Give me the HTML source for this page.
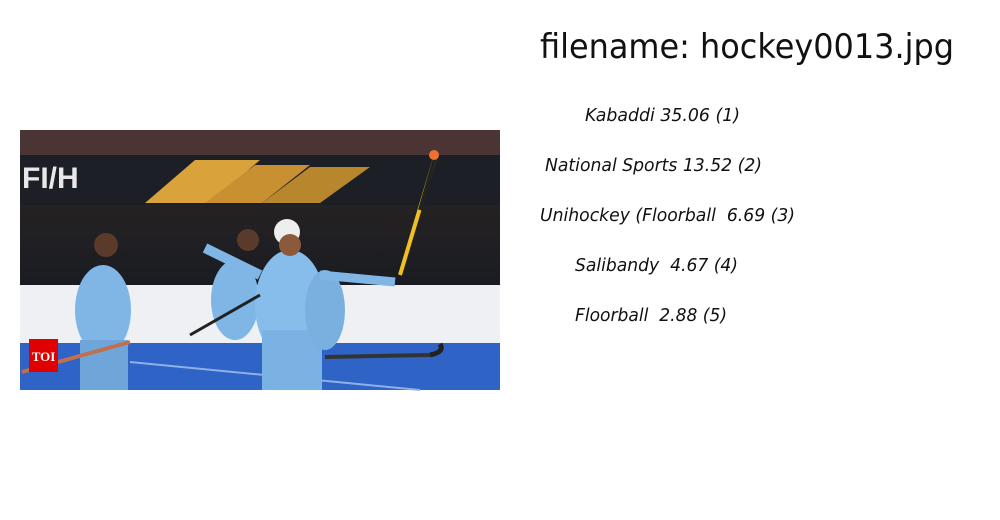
<!DOCTYPE html>
<html><head><meta charset="utf-8"><style>
html,body{margin:0;padding:0;background:#fff;width:1000px;height:520px;overflow:hidden}
svg{position:absolute;left:0;top:0}
</style></head><body>
<svg width="1000" height="520" viewBox="0 0 1000 520" xmlns="http://www.w3.org/2000/svg">
<defs>
<linearGradient id="bg" x1="0" y1="0" x2="0" y2="1">
<stop offset="0" stop-color="#3a2a2a"/><stop offset="0.15" stop-color="#2a2424"/><stop offset="0.6" stop-color="#1a1c22"/><stop offset="1" stop-color="#15171c"/>
</linearGradient>
</defs>
<rect x="20" y="130" width="480" height="260" fill="url(#bg)"/>
<rect x="20" y="130" width="480" height="25" fill="#4a3434"/>
<rect x="20" y="155" width="480" height="50" fill="#1d1f26"/>
<text x="22" y="188" font-family="Liberation Sans,sans-serif" font-weight="bold" font-size="30" fill="#e8e8e8">FI/H</text>
<polygon points="145,203 195,160 260,160 210,203" fill="#d9a23a"/>
<polygon points="205,203 255,165 310,165 262,203" fill="#c89030"/>
<polygon points="262,203 310,167 370,167 320,203" fill="#b8862c"/>
<rect x="20" y="285" width="480" height="60" fill="#eef0f3"/>
<rect x="20" y="343" width="480" height="47" fill="#2f63c6"/>
<line x1="130" y1="362" x2="420" y2="390" stroke="#8fb0e6" stroke-width="2"/>
<ellipse cx="103" cy="310" rx="28" ry="45" fill="#7fb6e6"/>
<rect x="80" y="340" width="48" height="50" fill="#6fa6da"/>
<circle cx="106" cy="245" r="12" fill="#5a3a2a"/>
<ellipse cx="235" cy="300" rx="24" ry="40" fill="#7fb6e6"/>
<circle cx="248" cy="240" r="11" fill="#5a3a2a"/>
<ellipse cx="290" cy="305" rx="35" ry="55" fill="#86bdea"/>
<rect x="262" y="330" width="60" height="60" fill="#79b2e3"/>
<circle cx="287" cy="232" r="13" fill="#eeeeee"/>
<circle cx="290" cy="245" r="11" fill="#8a5a3a"/>
<ellipse cx="325" cy="310" rx="20" ry="40" fill="#79b0e0"/>
<line x1="205" y1="248" x2="260" y2="275" stroke="#7fb6e6" stroke-width="10"/>
<line x1="320" y1="275" x2="395" y2="282" stroke="#7fb6e6" stroke-width="9"/>
<line x1="400" y1="275" x2="435" y2="158" stroke="#f0c020" stroke-width="4"/>
<line x1="420" y1="210" x2="435" y2="158" stroke="#222" stroke-width="4"/>
<circle cx="434" cy="155" r="5" fill="#f07030"/>
<line x1="22" y1="372" x2="130" y2="342" stroke="#c07050" stroke-width="4"/>
<line x1="190" y1="335" x2="260" y2="295" stroke="#222" stroke-width="3"/>
<line x1="325" y1="357" x2="430" y2="355" stroke="#333" stroke-width="4"/>
<path d="M430 355 Q445 352 440 344" stroke="#222" stroke-width="5" fill="none"/>
<rect x="29" y="339" width="29" height="33" fill="#e00000"/>
<text x="43.5" y="361" text-anchor="middle" font-family="Liberation Serif,serif" font-weight="bold" font-size="13" fill="#fff">TOI</text>

<text x="540" y="58" font-family="DejaVu Sans,sans-serif" font-size="34" fill="#111" textLength="414" lengthAdjust="spacingAndGlyphs">filename: hockey0013.jpg</text>
<g font-family="DejaVu Sans,sans-serif" font-style="italic" font-size="18" fill="#111" xml:space="preserve">
<text x="585" y="121" textLength="155" lengthAdjust="spacingAndGlyphs">Kabaddi 35.06 (1)</text>
<text x="545" y="171" textLength="217" lengthAdjust="spacingAndGlyphs">National Sports 13.52 (2)</text>
<text x="540" y="221" textLength="255" lengthAdjust="spacingAndGlyphs">Unihockey (Floorball&#160; 6.69 (3)</text>
<text x="575" y="271" textLength="163" lengthAdjust="spacingAndGlyphs">Salibandy&#160; 4.67 (4)</text>
<text x="575" y="321" textLength="152" lengthAdjust="spacingAndGlyphs">Floorball&#160; 2.88 (5)</text>
</g>
</svg>
</body></html>
